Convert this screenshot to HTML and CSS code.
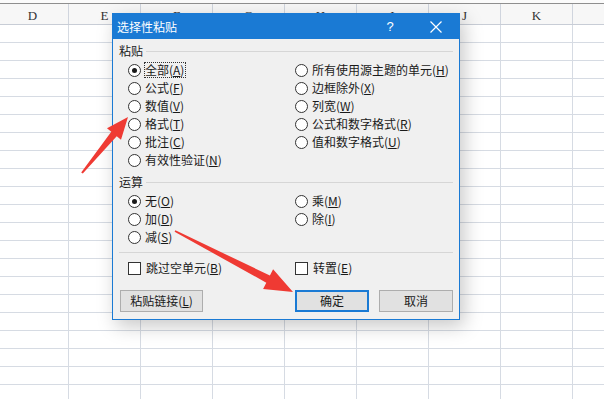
FILE: index.html
```html
<!DOCTYPE html>
<html lang="zh">
<head>
<meta charset="utf-8">
<link rel="stylesheet" href="styles.css">
</head>
<body>
<div class="sheet">
  <div class="colhead">
    <div class="ch">D</div><div class="ch">E</div><div class="ch">F</div><div class="ch">G</div><div class="ch">H</div><div class="ch">I</div><div class="ch">J</div><div class="ch">K</div>
  </div>
  <div class="cells"></div>
</div>

<div class="dialog">
  <div class="titlebar">
    <span class="title">选择性粘贴</span>
    <span class="tspacer"></span>
    <span class="help">?</span>
    <svg class="close" width="12" height="12" viewBox="0 0 12 12"><path d="M0.5 0.5L11.5 11.5M11.5 0.5L0.5 11.5" stroke="#fff" stroke-width="1.2" fill="none"/></svg>
  </div>
  <div class="body">
    <div class="sechead"><span>粘贴</span><i class="rule"></i></div>
    <div class="opts">
      <label class="opt"><span class="radio on"></span><span class="txt focus">全部(<u>A</u>)</span></label>
      <label class="opt"><span class="radio"></span><span class="txt">所有使用源主题的单元(<u>H</u>)</span></label>
      <label class="opt"><span class="radio"></span><span class="txt">公式(<u>F</u>)</span></label>
      <label class="opt"><span class="radio"></span><span class="txt">边框除外(<u>X</u>)</span></label>
      <label class="opt"><span class="radio"></span><span class="txt">数值(<u>V</u>)</span></label>
      <label class="opt"><span class="radio"></span><span class="txt">列宽(<u>W</u>)</span></label>
      <label class="opt"><span class="radio"></span><span class="txt">格式(<u>T</u>)</span></label>
      <label class="opt"><span class="radio"></span><span class="txt">公式和数字格式(<u>R</u>)</span></label>
      <label class="opt"><span class="radio"></span><span class="txt">批注(<u>C</u>)</span></label>
      <label class="opt"><span class="radio"></span><span class="txt">值和数字格式(<u>U</u>)</span></label>
      <label class="opt"><span class="radio"></span><span class="txt">有效性验证(<u>N</u>)</span></label>
      <span></span>
    </div>
    <div class="sechead sec2"><span>运算</span><i class="rule"></i></div>
    <div class="opts">
      <label class="opt"><span class="radio on"></span><span class="txt">无(<u>O</u>)</span></label>
      <label class="opt"><span class="radio"></span><span class="txt">乘(<u>M</u>)</span></label>
      <label class="opt"><span class="radio"></span><span class="txt">加(<u>D</u>)</span></label>
      <label class="opt"><span class="radio"></span><span class="txt">除(<u>I</u>)</span></label>
      <label class="opt"><span class="radio"></span><span class="txt">减(<u>S</u>)</span></label>
      <span></span>
    </div>
    <div class="sep"></div>
    <div class="opts checks">
      <label class="opt"><span class="check"></span><span class="txt">跳过空单元(<u>B</u>)</span></label>
      <label class="opt"><span class="check"></span><span class="txt">转置(<u>E</u>)</span></label>
    </div>
    <div class="buttons">
      <button class="btn link">粘贴链接(<u>L</u>)</button>
      <span class="spacer"></span>
      <button class="btn primary">确定</button>
      <button class="btn">取消</button>
    </div>
  </div>
</div>

<svg class="arrows" width="604" height="399" viewBox="0 0 604 399">
  <polygon fill="#ef3a33" points="128,117 121,139.7 116.7,136.2 82.8,173.5 81.2,172.5 111.3,131.8 107,128.3"/>
  <polygon fill="#ef3a33" points="293,292 263.1,288.9 266.3,282.7 174.6,231.7 175.4,230.3 269.9,275.5 273.1,269.3"/>
</svg>
</body>
</html>
```

FILE: styles.css
```css
html, body {
  margin: 0;
  padding: 0;
  background: #ffffff;
  width: 604px;
  height: 399px;
  overflow: hidden;
}
body {
  position: relative;
  font-family: "Noto Sans CJK SC", "Noto Sans", sans-serif;
  font-size: 12px;
  color: #1a1a1a;
}
.sheet {
  padding-top: 3px;
  background: #fbfbfb;
}
.colhead {
  display: flex;
  margin-left: -3px;
  height: 20px;
  border-top: 1px solid #8f8f8f;
  border-bottom: 1px solid #c8cdd6;
  background: #f7f7f7;
}
.ch {
  flex: 0 0 72px;
  box-sizing: border-box;
  border-right: 1px solid #d0d5de;
  text-align: center;
  font-family: "Liberation Serif", serif;
  font-size: 13px;
  line-height: 23px;
  color: #333;
}
.cells {
  height: 374px;
  background-color: #fff;
  background-image:
    linear-gradient(to right, transparent 71px, #d6dbe3 71px),
    linear-gradient(to bottom, transparent 17px, #d6dbe3 17px);
  background-size: 72px 100%, 100% 18px;
  background-position: -3px 0, 0 0;
}

.dialog {
  position: absolute;
  left: 112px;
  top: 13px;
  width: 348px;
  height: 307px;
  box-sizing: border-box;
  border: 1px solid #1a7ad4;
  background: #f0f0f0;
  box-shadow: 4px 6px 18px rgba(0, 0, 0, 0.22);
  display: flex;
  flex-direction: column;
}
.titlebar {
  height: 25px;
  background: #1a7ad4;
  color: #fff;
  display: flex;
  align-items: center;
  padding-left: 4px;
}
.title {
  font-size: 12px;
  line-height: 14px;
}
.tspacer {
  flex: 1;
}
.help {
  font-family: "Liberation Sans", sans-serif;
  font-size: 13px;
  width: 8px;
  text-align: center;
  margin-right: 36px;
}
.close {
  margin-right: 17px;
  display: block;
}
.body {
  padding: 5px 6px 0 6px;
  flex: 1;
}
.sechead {
  display: flex;
  align-items: center;
  height: 14px;
  line-height: 14px;
}
.sechead span {
  padding-right: 3px;
}
.rule {
  flex: 1;
  height: 1px;
  background: #d6d6d6;
  margin-top: 1px;
}
.sec2 {
  margin-top: 6px;
}
.opts {
  display: grid;
  grid-template-columns: 167px 1fr;
  margin-top: 3px;
  padding-left: 9px;
}
.opt {
  display: flex;
  align-items: center;
  height: 18px;
}
.radio {
  width: 13px;
  height: 13px;
  box-sizing: border-box;
  border: 1px solid #333;
  border-radius: 50%;
  background: #fff;
  position: relative;
  flex: none;
}
.radio.on::after {
  content: "";
  position: absolute;
  left: 3px;
  top: 3px;
  width: 5px;
  height: 5px;
  border-radius: 50%;
  background: #1a1a1a;
}
.check {
  width: 13px;
  height: 13px;
  box-sizing: border-box;
  border: 1px solid #333;
  background: #fff;
  flex: none;
}
.txt {
  margin-left: 3px;
  line-height: 14px;
  white-space: nowrap;
  border: 1px solid transparent;
  padding: 0 1px 0 0;
}
.txt.focus {
  border: 1px dotted #333;
}
.sep {
  margin-top: 6px;
  height: 1px;
  background: #d6d6d6;
}
.checks {
  margin-top: 6px;
}
.checks .txt {
  margin-left: 4px;
}
.buttons {
  display: flex;
  margin-top: 13px;
  gap: 10px;
}
.spacer {
  flex: 1;
}
.btn {
  font-family: "Noto Sans CJK SC", "Noto Sans", sans-serif;
  font-size: 12px;
  height: 22px;
  width: 74px;
  box-sizing: border-box;
  background: #e1e1e1;
  border: 1px solid #adadad;
  padding: 0;
  color: #1a1a1a;
  line-height: 18px;
}
.btn.link {
  width: 83px;
  margin-left: 1px;
}
.btn.primary {
  border: 2px solid #1a7ad4;
}
.arrows {
  position: absolute;
  left: 0;
  top: 0;
  pointer-events: none;
}
```
